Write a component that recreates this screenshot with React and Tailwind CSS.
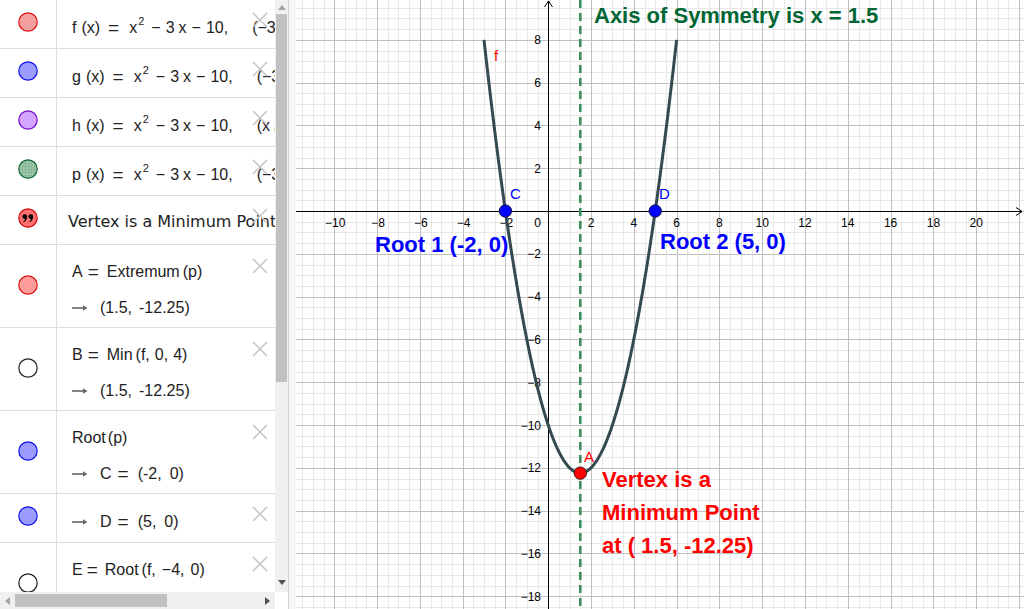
import React from "react";

const SVGFONT = '"Liberation Sans", Arial, sans-serif';

function XIcon({ double }) {
  return (
    <svg
      className={double ? "absolute right-[7px] top-[13px]" : "absolute right-[7px] top-[12px]"}
      width="16"
      height="16"
      viewBox="0 0 16 16"
    >
      <path d="M1 1L15 15M15 1L1 15" stroke="#c4c4c4" strokeWidth="1.5" fill="none" />
    </svg>
  );
}

function Dot({ fill, stroke, dotted }) {
  return (
    <svg width="20" height="20" viewBox="0 0 20 20">
      {dotted && (
        <defs>
          <pattern id="dots" width="3" height="3" patternUnits="userSpaceOnUse">
            <rect width="3" height="3" fill={fill} />
            <rect x="1" y="1" width="1" height="1" fill="#6f9f7f" />
          </pattern>
        </defs>
      )}
      <circle cx="10" cy="10" r="9.2" fill={dotted ? "url(#dots)" : fill} stroke={stroke} strokeWidth="1.2" />
    </svg>
  );
}

function QuoteDot() {
  return (
    <svg width="20" height="20" viewBox="0 0 20 20">
      <circle cx="10" cy="10" r="9.2" fill="#ff7070" stroke="#d01010" strokeWidth="1.2" />
      <circle cx="6.8" cy="8.6" r="2.4" fill="#000" />
      <path d="M8.9 9 C8.9 11.8 7.6 13.4 5.6 14.2 L5.2 13.4 C6.6 12.6 7.1 11.6 7.1 10.4 Z" fill="#000" />
      <circle cx="12.8" cy="8.6" r="2.4" fill="#000" />
      <path d="M14.9 9 C14.9 11.8 13.6 13.4 11.6 14.2 L11.2 13.4 C12.6 12.6 13.1 11.6 13.1 10.4 Z" fill="#000" />
    </svg>
  );
}

function Arrow() {
  return (
    <svg width="16" height="10" viewBox="0 0 16 10" className="mr-[12px] shrink-0">
      <path d="M0 5H13" stroke="#666" strokeWidth="1.6" />
      <path d="M11 2.2L15.5 5L11 7.8Z" fill="#666" />
    </svg>
  );
}

function Line({ children }) {
  return <div className="h-[20px] leading-[20px] whitespace-nowrap flex items-center">{children}</div>;
}

function Row({ marker, double, children, textPad }) {
  return (
    <div className={double ? "relative flex h-[83px] shrink-0 border-b border-[#dcdcdc]" : "relative flex h-[49px] shrink-0 border-b border-[#dcdcdc]"}>
      <div className={double ? "w-[57px] shrink-0 border-r border-[#dcdcdc] flex justify-center pt-[30px]" : "w-[57px] shrink-0 border-r border-[#dcdcdc] flex justify-center pt-[12px]"}>
        {marker}
      </div>
      <div
        className={
          textPad === "vertex"
            ? "flex-1 min-w-0 overflow-hidden flex flex-col pl-[11px] pt-[16px] font-['DejaVu_Sans',sans-serif]"
            : double
            ? "flex-1 min-w-0 overflow-hidden flex flex-col gap-[16px] pl-[15px] pt-[17px]"
            : "flex-1 min-w-0 overflow-hidden flex flex-col pl-[15px] pt-[18px]"
        }
      >
        {children}
      </div>
      <XIcon double={double} />
    </div>
  );
}

function Fn({ name, tail }) {
  return (
    <Line>
      <span>{name}</span>
      <span className="ml-[5px]">(x)</span>
      <span className="ml-[8px] text-[19px]">=</span>
      <span className="ml-[10px]">x</span>
      <sup className="text-[11px] top-[-7px] ml-[1px]">2</sup>
      <span className="ml-[7px]">−</span>
      <span className="ml-[5px]">3</span>
      <span className="ml-[4px]">x</span>
      <span className="ml-[5px]">−</span>
      <span className="ml-[5px]">10,</span>
      <span className="ml-[24px]">{tail}</span>
    </Line>
  );
}

function AlgebraPanel() {
  return (
    <div className="w-[288px] h-[609px] shrink-0 flex flex-col bg-white">
      <div className="flex h-[592px]">
        <div className="w-[275px] h-[592px] overflow-hidden flex flex-col text-[16px] text-[#222] font-['Liberation_Sans',Arial,sans-serif]">
          <Row marker={<Dot fill="#f4a0a0" stroke="#e01010" />}>
            <Fn name="f" tail="(−3 ≤ x ≤ 6)" />
          </Row>
          <Row marker={<Dot fill="#9c9cff" stroke="#1010f0" />}>
            <Fn name="g" tail="(−3 ≤ x ≤ 1.5)" />
          </Row>
          <Row marker={<Dot fill="#d4a6ff" stroke="#7010d0" />}>
            <Fn name="h" tail="(x ≥ 1.5)" />
          </Row>
          <Row marker={<Dot fill="#97c2a4" stroke="#0f6a35" dotted />}>
            <Fn name="p" tail="(−3 ≤ x ≤ 6)" />
          </Row>
          <Row marker={<QuoteDot />} textPad="vertex">
            <Line>Vertex is a Minimum Point</Line>
          </Row>
          <Row double marker={<Dot fill="#ff9c9c" stroke="#e01010" />}>
            <Line>
              <span>A</span>
              <span className="ml-[5px] text-[19px]">=</span>
              <span className="ml-[8px]">Extremum</span>
              <span className="ml-[3px]">(p)</span>
            </Line>
            <Line>
              <Arrow />
              <span>(1.5,</span>
              <span className="ml-[7px]">-12.25)</span>
            </Line>
          </Row>
          <Row double marker={<Dot fill="#ffffff" stroke="#222" />}>
            <Line>
              <span>B</span>
              <span className="ml-[5px] text-[19px]">=</span>
              <span className="ml-[8px]">Min</span>
              <span className="ml-[3px]">(f,</span>
              <span className="ml-[5px]">0,</span>
              <span className="ml-[5px]">4)</span>
            </Line>
            <Line>
              <Arrow />
              <span>(1.5,</span>
              <span className="ml-[7px]">-12.25)</span>
            </Line>
          </Row>
          <Row double marker={<Dot fill="#9c9cff" stroke="#1010f0" />}>
            <Line>
              <span>Root</span>
              <span className="ml-[2px]">(p)</span>
            </Line>
            <Line>
              <Arrow />
              <span>C</span>
              <span className="ml-[6px] text-[19px]">=</span>
              <span className="ml-[9px]">(-2,</span>
              <span className="ml-[8px]">0)</span>
            </Line>
          </Row>
          <Row marker={<Dot fill="#9c9cff" stroke="#1010f0" />}>
            <Line>
              <Arrow />
              <span>D</span>
              <span className="ml-[6px] text-[19px]">=</span>
              <span className="ml-[9px]">(5,</span>
              <span className="ml-[8px]">0)</span>
            </Line>
          </Row>
          <Row double marker={<Dot fill="#ffffff" stroke="#222" />}>
            <Line>
              <span>E</span>
              <span className="ml-[4px] text-[19px]">=</span>
              <span className="ml-[7px]">Root</span>
              <span className="ml-[3px]">(f,</span>
              <span className="ml-[6px]">−4,</span>
              <span className="ml-[6px]">0)</span>
            </Line>
            <Line>
              <Arrow />
              <span>(-2,</span>
              <span className="ml-[8px]">0)</span>
            </Line>
          </Row>
        </div>
        {/* vertical scrollbar */}
        <div className="w-[13px] h-[592px] bg-[#f0f0f0] flex flex-col items-center">
          <div className="h-[14px] flex items-center justify-center">
            <svg width="8" height="5" viewBox="0 0 8 5"><path d="M0 5L4 0L8 5Z" fill="#a3a3a3" /></svg>
          </div>
          <div className="w-[11px] h-[368px] bg-[#c1c1c1]" />
          <div className="flex-1" />
          <div className="h-[18px] flex items-center justify-center pb-[2px]">
            <svg width="8" height="5" viewBox="0 0 8 5"><path d="M0 0L8 0L4 5Z" fill="#505050" /></svg>
          </div>
        </div>
      </div>
      {/* horizontal scrollbar */}
      <div className="flex h-[17px]">
        <div className="w-[275px] h-[17px] bg-[#f0f0f0] flex items-center">
          <div className="w-[15px] flex items-center justify-center">
            <svg width="5" height="8" viewBox="0 0 5 8"><path d="M5 0L0 4L5 8Z" fill="#a3a3a3" /></svg>
          </div>
          <div className="w-[152px] h-[13px] bg-[#c1c1c1]" />
          <div className="flex-1" />
          <div className="w-[16px] flex items-center justify-center">
            <svg width="5" height="8" viewBox="0 0 5 8"><path d="M0 0L5 4L0 8Z" fill="#505050" /></svg>
          </div>
        </div>
        <div className="w-[13px] bg-white" />
      </div>
    </div>
  );
}

function Graph() {
  const W = 728;
  const H = 609;
  const ox = 252.2;
  const oy = 211;
  const s = 21.4;
  const X = (x) => ox + x * s;
  const Y = (y) => oy - y * s;
  const px = (v) => Math.round(v) + 0.5;

  const minorV = [];
  const majorV = [];
  for (let i = -26; i <= 46; i++) {
    const sx = X(i * 0.5);
    if (sx < 0 || sx > W) continue;
    if (i % 4 === 0) majorV.push(px(sx));
    else minorV.push(px(sx));
  }
  const minorH = [];
  const majorH = [];
  for (let i = -40; i <= 22; i++) {
    const sy = Y(i * 0.5);
    if (sy < 0 || sy > H) continue;
    if (i % 4 === 0) majorH.push(px(sy));
    else minorH.push(px(sy));
  }

  let d = "";
  for (let i = 0; i <= 180; i++) {
    const x = -3 + (9 * i) / 180;
    const y = x * x - 3 * x - 10;
    d += (i === 0 ? "M" : "L") + X(x).toFixed(2) + " " + Y(y).toFixed(2) + " ";
  }

  const fmt = (n) => (n < 0 ? "−" + Math.abs(n) : String(n));
  const xLabels = [];
  for (let v = -10; v <= 20; v += 2) if (v !== 0) xLabels.push(v);
  const yLabels = [8, 6, 4, 2, -2, -4, -6, -8, -10, -12, -14, -16, -18];
  const axX = px(X(0));
  const axY = px(oy);

  return (
    <div className="flex-1 h-[609px] bg-white overflow-hidden">
      <svg width={W} height={H} viewBox={`0 0 ${W} ${H}`} className="block">
        <rect width={W} height={H} fill="#fff" />
        {minorV.map((x) => (
          <line key={"mv" + x} x1={x} y1={0} x2={x} y2={H} stroke="#e8e8e8" strokeWidth="1" />
        ))}
        {minorH.map((y) => (
          <line key={"mh" + y} x1={0} y1={y} x2={W} y2={y} stroke="#e8e8e8" strokeWidth="1" />
        ))}
        {majorV.map((x) => (
          <line key={"Mv" + x} x1={x} y1={0} x2={x} y2={H} stroke="#c0c0c0" strokeWidth="1" />
        ))}
        {majorH.map((y) => (
          <line key={"Mh" + y} x1={0} y1={y} x2={W} y2={y} stroke="#c0c0c0" strokeWidth="1" />
        ))}

        <line x1={0} y1={axY} x2={W - 2} y2={axY} stroke="#000" strokeWidth="1" />
        <path d={`M${W - 8} ${axY - 4}L${W - 2} ${axY}L${W - 8} ${axY + 4}`} stroke="#000" fill="none" strokeWidth="1" />
        <line x1={axX} y1={1} x2={axX} y2={H} stroke="#000" strokeWidth="1" />
        <path d={`M${axX - 4} 7L${axX} 1L${axX + 4} 7`} stroke="#000" fill="none" strokeWidth="1" />

        <g fontFamily={SVGFONT} fontSize="12" fill="#000">
          {xLabels.map((v) => (
            <text key={"xl" + v} x={X(v) + (v < 0 ? 1 : 0)} y={227} textAnchor="middle">
              {fmt(v)}
            </text>
          ))}
          {yLabels.map((v) => (
            <text key={"yl" + v} x={245} y={Y(v) + 4.5} textAnchor="end">
              {fmt(v)}
            </text>
          ))}
          <text x={245} y={227} textAnchor="end">0</text>
        </g>

        <line x1={X(1.5)} y1={0} x2={X(1.5)} y2={H} stroke="#3f8c5c" strokeWidth="2.6" strokeDasharray="8 5" />

        <path d={d} fill="none" stroke="#344a50" strokeWidth="3" strokeLinejoin="round" />

        <circle cx={X(-2)} cy={oy} r="6.2" fill="#0000ff" stroke="#1a1a4a" strokeWidth="1" />
        <circle cx={X(5)} cy={oy} r="6.2" fill="#0000ff" stroke="#1a1a4a" strokeWidth="1" />
        <circle cx={X(1.5)} cy={Y(-12.25)} r="6.2" fill="#ff0000" stroke="#3a1a1a" strokeWidth="1" />

        <g fontFamily={SVGFONT} fontSize="15">
          <text x={198} y={61} fill="#ff0000">f</text>
          <text x={214} y={199} fill="#0000ff">C</text>
          <text x={363} y={199} fill="#0000ff">D</text>
          <text x={288} y={462} fill="#ff0000">A</text>
        </g>

        <g fontFamily={SVGFONT} fontSize="22" fontWeight="bold">
          <text x={298} y={23} fill="#006633">Axis of Symmetry is x = 1.5</text>
          <text x={79} y={252} fill="#0000ff">Root 1 (-2, 0)</text>
          <text x={364} y={249} fill="#0000ff">Root 2 (5, 0)</text>
          <text x={306} y={487} fill="#ff0000">Vertex is a</text>
          <text x={306} y={520} fill="#ff0000">Minimum Point</text>
          <text x={306} y={553} fill="#ff0000">at ( 1.5, -12.25)</text>
        </g>
      </svg>
    </div>
  );
}

export default function App() {
  return (
    <div className="w-[1024px] h-[609px] flex overflow-hidden bg-white">
      <AlgebraPanel />
      <div className="w-[8px] h-[609px] shrink-0 border-l border-[#d4d4d4] bg-[#f6f6f6]" />
      <Graph />
    </div>
  );
}
